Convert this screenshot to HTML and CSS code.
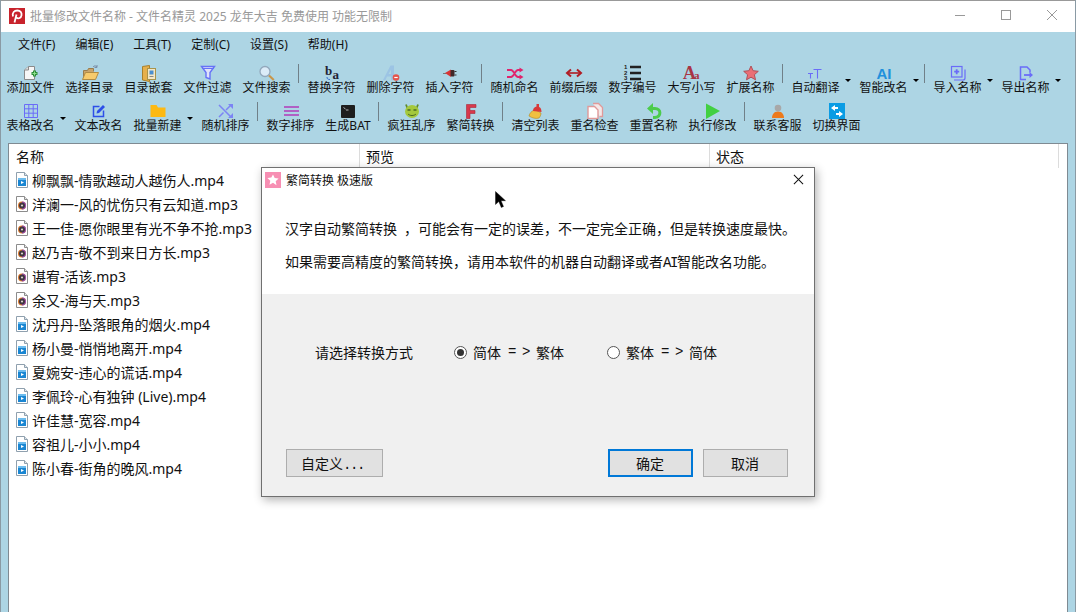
FILE: index.html
```html
<!DOCTYPE html>
<html lang="zh-CN">
<head>
<meta charset="utf-8">
<title>批量修改文件名称</title>
<link rel="stylesheet" href="styles.css">
</head>
<body>
<svg class="defs" width="0" height="0" aria-hidden="true">
  <symbol id="mp4" viewBox="0 0 12 16">
    <path d="M.5.500h8l3 3v12H.5z" fill="#fff" stroke="#8fa0ae"/>
    <path d="M8.500.500v3h3" fill="#dfe6ec" stroke="#8fa0ae"/>
    <rect x="2" y="6" width="8" height="8" fill="#1a86d2"/>
    <rect x="2" y="6" width="8" height="2" fill="#6cbcee"/>
    <path d="M5 9l3 1.500-3 1.500z" fill="#fff"/>
  </symbol>
  <symbol id="mp3" viewBox="0 0 12 16">
    <path d="M.5.500h8l3 3v12H.5z" fill="#fff" stroke="#8c8c8c"/>
    <path d="M8.500.500v3h3" fill="#e6e6e6" stroke="#8c8c8c"/>
    <circle cx="6" cy="9.500" r="4" fill="#d8782c"/>
    <path d="M6 5.500a4 4 0 0 1 0 8z" fill="#9a4cb0"/>
    <circle cx="6" cy="9.500" r="3" fill="#403640"/>
    <circle cx="6" cy="9.500" r="1.100" fill="#dcd4cc"/>
  </symbol>
</svg>
<div class="app">
  <header class="titlebar">
    <svg class="logo" viewBox="0 0 16 16"><rect width="16" height="16" fill="#c8232c"/><path d="M5.500 14.500l2-8M4 8.500C2.800 4.500 5.500 2.500 8.300 2.500c3 0 4.700 2 4.200 4.800-.5 2.600-2.800 3.900-5 2.500" fill="none" stroke="#fff" stroke-width="1.800"/></svg>
    <span class="title-text">批量修改文件名称 - 文件名精灵 2025 龙年大吉 免费使用 功能无限制</span>
    <div class="win-buttons">
      <svg class="win-btn" viewBox="0 0 46 30"><path d="M18 14.500h10" stroke="#999" fill="none"/></svg>
      <svg class="win-btn" viewBox="0 0 46 30"><rect x="18.500" y="9.500" width="9" height="9" stroke="#999" fill="none"/></svg>
      <svg class="win-btn" viewBox="0 0 46 30"><path d="M18 9l10 10M28 9l-10 10" stroke="#999" fill="none"/></svg>
    </div>
  </header>

  <nav class="menubar">
    <span class="menu-item">文件(F)</span>
    <span class="menu-item">编辑(E)</span>
    <span class="menu-item">工具(T)</span>
    <span class="menu-item">定制(C)</span>
    <span class="menu-item">设置(S)</span>
    <span class="menu-item">帮助(H)</span>
  </nav>

  <div class="toolbar">
    <div class="tool"><svg class="ico" viewBox="0 0 20 20"><path d="M7.500 3.500h6v13h-10V7z" fill="#f6f6f6" stroke="#8a8a8a"/><path d="M7.500 3.500V7h-4" fill="#ddd" stroke="#8a8a8a"/><path d="M13.500 7.500v6M10.500 10.500h6" stroke="#2f8f3a" stroke-width="3"/><path d="M13.500 8.500v4M11.500 10.500h4" stroke="#8fe08f" stroke-width="1"/></svg><span>添加文件</span></div>
    <div class="tool"><svg class="ico" viewBox="0 0 20 20"><path d="M3.500 16V7.500h4l1-2h5v3" fill="#c9a46a" stroke="#9a7c4c"/><path d="M2.500 16.500l3-7h13l-3 7z" fill="#f7cb6c" stroke="#b08c44"/><path d="M13 4c1-1.500 3-1.500 4 0M17 2v2.500h-2.500" fill="none" stroke="#7a8ea8"/></svg><span>选择目录</span></div>
    <div class="tool"><svg class="ico" viewBox="0 0 20 20"><path d="M3.500 3.500l7-1v16l-7-1.500z" fill="#e6b04c" stroke="#a8802c"/><rect x="8.500" y="5.500" width="8" height="11" fill="#f3e7c7" stroke="#a8944c"/><rect x="10.500" y="7.500" width="4" height="4" fill="#4a8fd0"/><path d="M10.500 13.500h4" stroke="#888"/></svg><span>目录嵌套</span></div>
    <div class="tool"><svg class="ico" viewBox="0 0 20 20"><path d="M3.500 3.500h13l-4.500 6v6.500l-4-1.500v-5z" fill="#dfe2fb" stroke="#6672f6" stroke-width="1.400"/><path d="M4 5.500h12" stroke="#6672f6"/></svg><span>文件过滤</span></div>
    <div class="tool"><svg class="ico" viewBox="0 0 20 20"><circle cx="8" cy="8.500" r="5" fill="#dcecf8" stroke="#93a8bc" stroke-width="1.300"/><path d="M12 12.500l4.800 4.500" stroke="#c8964a" stroke-width="2.200"/></svg><span>文件搜索</span></div>
    <i class="sep"></i>
    <div class="tool"><svg class="ico" viewBox="0 0 20 20"><text class="ba" x="3" y="12">b</text><text class="ba" x="10.500" y="15.500">a</text><path d="M5 14c0 2 1 2.500 3 2.500" fill="none" stroke="#3a6fd0"/></svg><span>替换字符</span></div>
    <div class="tool"><svg class="ico" viewBox="0 0 20 20"><path d="M2 17L9.500 2.500H13V17h-3v-3.500H6L4.500 17zM7.500 11H10V6.500z" fill="#9cc4e4" fill-rule="evenodd"/><circle cx="15" cy="14.500" r="3.300" fill="#e4544c"/><path d="M13.300 14.500h3.400" stroke="#fff" stroke-width="1.200"/></svg><span>删除字符</span></div>
    <div class="tool"><svg class="ico" viewBox="0 0 20 20"><path d="M3 10.500h3" stroke="#777"/><path d="M5 10l6-3.500v7.500z" fill="#d83434"/><rect x="10.500" y="7" width="4" height="6.500" rx="1" fill="#402828"/><path d="M14.500 8.500h2M14.500 12h2" stroke="#333"/></svg><span>插入字符</span></div>
    <i class="sep"></i>
    <div class="tool"><svg class="ico" viewBox="0 0 20 20"><path d="M2 7h4c3 0 4 7 7 7h3M2 14h4c3 0 4-7 7-7h3" fill="none" stroke="#e0246c" stroke-width="1.800"/><path d="M14.500 4.500l4 2.500-4 2.500zM14.500 11.500l4 2.500-4 2.500z" fill="#e0246c"/></svg><span>随机命名</span></div>
    <div class="tool"><svg class="ico" viewBox="0 0 20 20"><path d="M4 10h12" stroke="#b01c24" stroke-width="1.600"/><path d="M7 6.500L3 10l4 3.500M13 6.500l4 3.500-4 3.500" fill="none" stroke="#b01c24" stroke-width="2"/></svg><span>前缀后缀</span></div>
    <div class="tool"><svg class="ico" viewBox="0 0 20 20"><text class="nums" x="1" y="6">1</text><text class="nums" x="1" y="11.500">2</text><text class="nums" x="1" y="17">3</text><path d="M7 4h11M7 10h11M7 16h11" stroke="#222" stroke-width="2.400"/></svg><span>数字编号</span></div>
    <div class="tool"><svg class="ico" viewBox="0 0 20 20"><text class="big-a" x="1" y="16">A</text><text class="small-a" x="12" y="16">a</text></svg><span>大写小写</span></div>
    <div class="tool"><svg class="ico" viewBox="0 0 20 20"><path d="M10 3l2.100 4.700 5.200.6-3.900 3.400 1.100 5.100-4.500-2.600-4.500 2.600 1.100-5.100-3.900-3.400 5.200-.6z" fill="#ea6f76" stroke="#b05058"/></svg><span>扩展名称</span></div>
    <i class="sep"></i>
    <div class="tool"><svg class="ico" viewBox="0 0 20 20"><path d="M7.500 6.500h8M11.500 6.500v9M2 10.500h5M4.500 10.500v5" fill="none" stroke="#6a6cf8" stroke-width="1.100"/></svg><span>自动翻译</span></div><b class="caret"></b>
    <div class="tool"><svg class="ico" viewBox="0 0 20 20"><text class="ai" x="10" y="16">AI</text></svg><span>智能改名</span></div><b class="caret"></b>
    <i class="sep"></i>
    <div class="tool"><svg class="ico" viewBox="0 0 20 20"><rect x="3.500" y="3.500" width="10.500" height="10.500" fill="none" stroke="#6a6cf8" stroke-width="1.200"/><path d="M17 6.500v8.500a2 2 0 0 1-2 2H6" fill="none" stroke="#6a6cf8" stroke-width="1.200"/><path d="M8.700 6.200v5M6.200 8.700h5" stroke="#6a6cf8" stroke-width="1.800"/></svg><span>导入名称</span></div><b class="caret"></b>
    <div class="tool"><svg class="ico" viewBox="0 0 20 20"><path d="M10 16.500H4.500v-12.500h6.500l3 3v2.500" fill="none" stroke="#6a6cf8" stroke-width="1.500"/><path d="M8 12h6" stroke="#6a6cf8" stroke-width="1.800"/><path d="M13.500 9l3.500 3-3.500 3z" fill="#6a6cf8"/></svg><span>导出名称</span></div><b class="caret"></b>
  </div>

  <div class="toolbar">
    <div class="tool"><svg class="ico" viewBox="0 0 20 20"><path d="M3.500 3.500h13v13h-13zM3.500 7.800h13M3.500 12.200h13M7.800 3.500v13M12.200 3.500v13" fill="none" stroke="#6a6cf8"/></svg><span>表格改名</span></div><b class="caret"></b>
    <div class="tool"><svg class="ico" viewBox="0 0 20 20"><path d="M10.500 5.500h-6v10h10v-6" fill="none" stroke="#2d4fe8" stroke-width="1.500"/><path d="M7.500 12.500l.5-2.500 6-6 2 2-6 6z" fill="#2d4fe8"/></svg><span>文本改名</span></div>
    <div class="tool"><svg class="ico" viewBox="0 0 20 20"><path d="M2.500 4h6l1.500 2.500h7.500V16h-15z" fill="#fdb913"/></svg><span>批量新建</span></div><b class="caret"></b>
    <div class="tool"><svg class="ico" viewBox="0 0 20 20"><path d="M3 4l12 12M3 16l4.500-4.500M10 9l5-5" fill="none" stroke="#7c84f4" stroke-width="1.500"/><path d="M12 3h5v5zM12 17h5v-5z" fill="#7c84f4"/></svg><span>随机排序</span></div>
    <i class="sep"></i>
    <div class="tool"><svg class="ico" viewBox="0 0 20 20"><path d="M3 6h15M3 10h15M3 14h15" stroke="#b060c4" stroke-width="2"/></svg><span>数字排序</span></div>
    <div class="tool tool-bat"><svg class="ico" viewBox="0 0 20 20"><rect x="3" y="4" width="14" height="13" rx="1" fill="#1e1e1e"/><path d="M5.500 6.500l2 1.500M8 9h2.500" fill="none" stroke="#ddd" stroke-width=".8"/></svg><span>生成BAT</span></div>
    <i class="sep"></i>
    <div class="tool"><svg class="ico" viewBox="0 0 20 20"><path d="M4 3.500l1.500 4M16 3.500l-1.500 4" stroke="#5f8a2c" stroke-width="1.800"/><ellipse cx="10" cy="10.500" rx="7" ry="6.500" fill="#a4c83c"/><path d="M5.500 9h3M11.500 9h3" stroke="#4a6a24" stroke-width="1.400"/><path d="M6 13c2 2 6 2 8 0" fill="none" stroke="#4a6a24"/></svg><span>疯狂乱序</span></div>
    <div class="tool"><svg class="ico" viewBox="0 0 20 20"><path d="M5.500 3.500h9.500v3H9v3h5v3H9v5H5.500z" fill="#d8384c" stroke="#a82838" stroke-width=".6"/></svg><span>繁简转换</span></div>
    <i class="sep"></i>
    <div class="tool"><svg class="ico" viewBox="0 0 20 20"><path d="M3 15c1-4 4-6 7-6l5 3c0 2-1 4-2 5-3 1-7 0-10-2z" fill="#f0c040" stroke="#b08a28" stroke-width=".6"/><path d="M7 10c0-3 2-4 3.500-4.500V3h2.500v3c1.500.5 2.500 2 2.500 5z" fill="#d83838"/></svg><span>清空列表</span></div>
    <div class="tool"><svg class="ico" viewBox="0 0 20 20"><path d="M8 2.500h5.500l4 4v9h-3" fill="#f4e8e8" stroke="#e09a9a" stroke-width="1.300"/><path d="M3 5.500h6.500l3.500 3.500v8.500H3z" fill="#fff" stroke="#e09a9a" stroke-width="1.400"/></svg><span>重名检查</span></div>
    <div class="tool"><svg class="ico" viewBox="0 0 20 20"><path d="M8 7.500h3c6.500 0 6.500 8 0 9H9" fill="none" stroke="#4ccc4c" stroke-width="3"/><path d="M9 2v11L3 7.500z" fill="#4ccc4c"/></svg><span>重置名称</span></div>
    <div class="tool"><svg class="ico" viewBox="0 0 20 20"><path d="M3 2.500L17 10 3 18z" fill="#42d042"/></svg><span>执行修改</span></div>
    <i class="sep"></i>
    <div class="tool"><svg class="ico" viewBox="0 0 20 20"><circle cx="10" cy="7" r="3.300" fill="#a8a8a8"/><path d="M4 17c0-3 1.500-6.500 6-6.500s6 3.500 6 6.500z" fill="#ec7a1c"/></svg><span>联系客服</span></div>
    <div class="tool"><svg class="ico" viewBox="0 0 20 20"><rect x="2" y="2" width="16" height="16" fill="#0a9ce4"/><path d="M11 6H8V4L4 7l4 3V8h3zM9 12h3v-2l4 3-4 3v-2H9z" fill="#fff"/></svg><span>切换界面</span></div>
  </div>

  <main class="panel">
    <div class="list-head">
      <div class="col col-name">名称</div>
      <div class="col col-prev">预览</div>
      <div class="col col-state">状态</div>
    </div>
    <ul class="file-list">
      <li><svg class="file-ico"><use href="#mp4"/></svg>柳飘飘-情歌越动人越伤人.mp4</li>
      <li><svg class="file-ico"><use href="#mp3"/></svg>洋澜一-风的忧伤只有云知道.mp3</li>
      <li><svg class="file-ico"><use href="#mp3"/></svg>王一佳-愿你眼里有光不争不抢.mp3</li>
      <li><svg class="file-ico"><use href="#mp3"/></svg>赵乃吉-敬不到来日方长.mp3</li>
      <li><svg class="file-ico"><use href="#mp3"/></svg>谌宥-活该.mp3</li>
      <li><svg class="file-ico"><use href="#mp3"/></svg>余又-海与天.mp3</li>
      <li><svg class="file-ico"><use href="#mp4"/></svg>沈丹丹-坠落眼角的烟火.mp4</li>
      <li><svg class="file-ico"><use href="#mp4"/></svg>杨小曼-悄悄地离开.mp4</li>
      <li><svg class="file-ico"><use href="#mp4"/></svg>夏婉安-违心的谎话.mp4</li>
      <li><svg class="file-ico"><use href="#mp4"/></svg>李佩玲-心有独钟 (Live).mp4</li>
      <li><svg class="file-ico"><use href="#mp4"/></svg>许佳慧-宽容.mp4</li>
      <li><svg class="file-ico"><use href="#mp4"/></svg>容祖儿-小小.mp4</li>
      <li><svg class="file-ico"><use href="#mp4"/></svg>陈小春-街角的晚风.mp4</li>
    </ul>
  </main>

  <section class="dialog">
    <div class="dlg-top">
      <div class="dlg-title">
        <svg class="dlg-icon" viewBox="0 0 16 16"><rect width="16" height="16" fill="#f78fb3"/><path d="M8 2.500l1.700 3.600 3.900.5-2.900 2.700.8 3.900L8 10.800l-3.500 1.900.8-3.900-2.900-2.700 3.900-.5z" fill="#fff"/></svg>
        <span class="dlg-title-text">繁简转换 极速版</span>
        <svg class="dlg-close" viewBox="0 0 12 12"><path d="M1 1l10 10M11 1L1 11" stroke="#111" stroke-width="1.100" fill="none"/></svg>
      </div>
      <p class="dlg-line first">汉字自动繁简转换<span class="half"> </span>，可能会有一定的误差，不一定完全正确，但是转换速度最快。</p>
      <p class="dlg-line">如果需要高精度的繁简转换，请用本软件的机器自动翻译或者<span class="half">AI</span>智能改名功能。</p>
    </div>
    <div class="dlg-body">
      <div class="choice-row">
        <span class="choice-label">请选择转换方式</span>
        <span class="radio-opt"><i class="radio on"></i>简体<span class="half"> = &gt; </span>繁体</span>
        <span class="radio-opt"><i class="radio"></i>繁体<span class="half"> = &gt; </span>简体</span>
      </div>
      <div class="dlg-actions">
        <button class="btn btn-custom">自定义<span class="half">...</span></button>
        <button class="btn btn-ok">确定</button>
        <button class="btn">取消</button>
      </div>
    </div>
    <svg class="cursor" viewBox="0 0 12 18"><path d="M.5.500v13l3.300-3 2.500 6 2.200-1-2.500-5.800h4.500z" fill="#000" stroke="#000" stroke-width=".4"/></svg>
  </section>
</div>
</body>
</html>
```

FILE: styles.css
```css
* { box-sizing: border-box; }
html, body { margin: 0; padding: 0; }
body {
  width: 1076px;
  height: 612px;
  overflow: hidden;
  font-family: "Noto Sans", "Noto Sans CJK SC", sans-serif;
  font-size: 12px;
  color: #111;
  background: #add5e4;
}
.defs { position: absolute; }
.app {
  position: relative;
  display: flex;
  flex-direction: column;
  height: 612px;
  border-left: 1px solid #8a9aa4;
  border-right: 1px solid #8a9aa4;
}

.titlebar {
  display: flex;
  align-items: center;
  flex: 0 0 31px;
  padding: 0 0 1px 8px;
  background: #fff;
  border-top: 1px solid #999;
}
.logo { width: 16px; height: 16px; }
.title-text { margin-left: 5px; color: #999; font-size: 12px; white-space: nowrap; }
.win-buttons { display: flex; margin-left: auto; }
.win-btn { width: 46px; height: 30px; }

.menubar { display: flex; flex: 0 0 28px; align-items: center; padding: 0 0 2px 7px; }
.menu-item { padding: 0 10px; line-height: 16px; }

.toolbar { display: flex; flex: 0 0 38px; align-items: flex-start; }
.tool { display: flex; flex-direction: column; align-items: center; flex: 0 0 59px; white-space: nowrap; }
.tool.tool-bat { flex-basis: 56px; }
.tool span { line-height: 16px; margin-top: -3px; }
.ico { width: 20px; height: 20px; display: block; margin-top: 3px; overflow: visible; }
.sep { flex: 0 0 1px; height: 19px; margin: 4px 3px 0 2px; background: #708088; }
.caret {
  flex: 0 0 6px;
  height: 0;
  margin: 19px 3px 0 0;
  border-top: 3.500px solid #000;
  border-left: 3px solid transparent;
  border-right: 3px solid transparent;
}
.ba { font-family: "Liberation Serif", serif; font-weight: 700; font-size: 13px; fill: #223; }
.nums { font-family: "Liberation Sans", sans-serif; font-size: 6px; font-weight: 700; fill: #222; }
.ai { font-family: "Liberation Sans", sans-serif; font-size: 15px; font-weight: 700; fill: #2090dc; text-anchor: middle; }
.big-a { font-family: "Liberation Serif", serif; font-weight: 700; font-size: 18px; fill: #a83444; }
.small-a { font-family: "Liberation Serif", serif; font-weight: 700; font-size: 11px; fill: #a83444; }

.panel {
  flex: 1;
  margin: 7px 7px 0;
  background: #fff;
  border: 1px solid #7f8a92;
  border-bottom: 0;
  min-height: 0;
}
.list-head { display: flex; height: 24px; font-size: 14px; }
.col { padding: 4px 6px 0; line-height: 18px; border-right: 1px solid #dcdcdc; }
.col-name { width: 351px; padding-left: 7px; }
.col-prev { width: 350px; }
.col-state { width: 349px; }
.file-list { list-style: none; margin: 0; padding: 0 0 0 7px; }
.file-list li { display: flex; align-items: center; height: 24px; font-size: 14px; white-space: nowrap; }
.file-ico { width: 12px; height: 16px; margin-right: 4px; flex: none; }

.dialog {
  position: absolute;
  left: 260px;
  top: 167px;
  width: 554px;
  height: 330px;
  display: flex;
  flex-direction: column;
  background: #f0f0f0;
  border: 1px solid #707070;
  box-shadow: 2px 3px 9px rgba(0, 0, 0, .3);
}
.dlg-top { flex: 0 0 126px; background: #fff; }
.dlg-title { display: flex; align-items: center; height: 23px; padding: 0 8px 0 3px; }
.dlg-icon { width: 16px; height: 16px; }
.dlg-title-text { margin-left: 5px; font-size: 12px; }
.dlg-close { width: 11px; height: 11px; margin-left: auto; margin-right: 2px; }
.dlg-line { margin: 12px 0 0 23px; font-size: 14px; line-height: 20px; color: #111; white-space: pre; }
.dlg-line.first { margin-top: 28px; }
.half { font-family: "Liberation Mono", monospace; font-size: 14px; letter-spacing: -1.400px; white-space: pre; }

.dlg-body { flex: 1; display: flex; flex-direction: column; font-size: 14px; }
.choice-row { display: flex; align-items: center; height: 20px; margin-top: 48px; padding-left: 53px; }
.choice-label { flex: 0 0 139px; }
.radio-opt { display: flex; align-items: center; flex: 0 0 153px; white-space: pre; }
.radio {
  width: 13px; height: 13px; margin-right: 6px; flex: none;
  border: 1px solid #555; border-radius: 50%; background: #fff;
  display: flex; align-items: center; justify-content: center;
}
.radio.on::after { content: ""; width: 7px; height: 7px; border-radius: 50%; background: #333; }

.dlg-actions { display: flex; align-items: center; margin-top: 87px; padding-left: 24px; }
.btn {
  width: 85px; height: 28px; margin: 0 0 0 10px; padding: 0 1px 0 0;
  font: inherit; color: #111;
  background: #e1e1e1; border: 1px solid #adadad;
}
.btn-custom { width: 97px; margin-left: 0; margin-right: 215px; padding-right: 4px; }
.btn-ok { margin-left: 10px; border: 2px solid #0078d7; }
.cursor { position: absolute; left: 233px; top: 23px; width: 12px; height: 18px; }
```
